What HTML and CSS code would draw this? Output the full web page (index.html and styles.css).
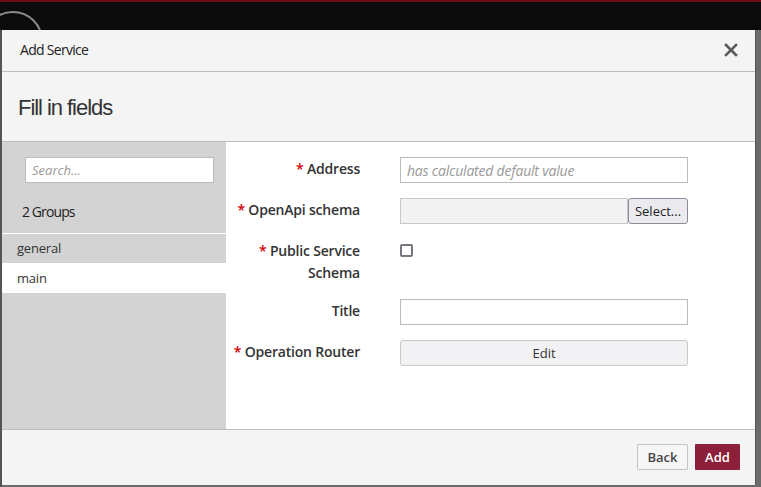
FILE: index.html
```html
<!DOCTYPE html>
<html>
<head>
<meta charset="utf-8">
<link rel="stylesheet" href="styles.css">
</head>
<body>
<div class="page">
  <div class="topbar">
    <svg class="logo" width="60" height="30" viewBox="0 0 60 30"><circle cx="13" cy="41" r="29" fill="none" stroke="#8a8a8a" stroke-width="2"/></svg>
  </div>
  <div class="backdrop"></div>
</div>

<div class="modal">
  <div class="modal-header">
    <span class="modal-title">Add Service</span>
    <button class="close" aria-label="Close">
      <svg width="14" height="14" viewBox="0 0 14 14"><path d="M2 2 L12 12 M12 2 L2 12" stroke="#5a5a5a" stroke-width="2.6" stroke-linecap="square"/></svg>
    </button>
  </div>
  <div class="modal-sub">
    <h1 class="sub-title">Fill in fields</h1>
  </div>
  <div class="modal-body">
    <aside class="sidebar">
      <input class="search" type="text" placeholder="Search...">
      <div class="groups-count">2 Groups</div>
      <ul class="groups">
        <li class="group">general</li>
        <li class="group active">main</li>
      </ul>
    </aside>
    <form class="form">
      <label class="lbl"><span class="req">*</span> Address</label>
      <div class="ctl"><input class="inp" type="text" placeholder="has calculated default value"></div>

      <label class="lbl"><span class="req">*</span> OpenApi schema</label>
      <div class="ctl file"><input class="inp disabled" type="text" disabled><button type="button" class="select-btn">Select...</button></div>

      <label class="lbl two"><span class="req">*</span> Public Service Schema</label>
      <div class="ctl"><span class="checkbox"></span></div>

      <label class="lbl">Title</label>
      <div class="ctl"><input class="inp" type="text"></div>

      <label class="lbl"><span class="req">*</span> Operation Router</label>
      <div class="ctl"><button type="button" class="edit-btn">Edit</button></div>
    </form>
  </div>
  <div class="modal-footer">
    <button class="btn back">Back</button>
    <button class="btn add">Add</button>
  </div>
</div>
</body>
</html>
```

FILE: styles.css
```css
* { box-sizing: border-box; }
html, body { margin: 0; padding: 0; }
body {
  width: 761px;
  height: 487px;
  overflow: hidden;
  background: #666;
  font-family: "Open Sans", "Liberation Sans", sans-serif;
  position: relative;
}
.page { height: 100%; display: flex; flex-direction: column; }
.topbar {
  height: 30px;
  background: #0b0b0b;
  border-top: 2px solid #6b0d18;
  position: relative;
  overflow: hidden;
}
.logo { position: absolute; left: 0; top: -2px; }
.backdrop { flex: 1; background: linear-gradient(to right, #555 0 2px, #6b6b6b 2px); }

.modal {
  position: absolute;
  left: 2px;
  top: 30px;
  width: 754px;
  height: 455px;
  background: #fff;
  border-right: 1px solid #555;
  display: flex;
  flex-direction: column;
}
.modal-header {
  height: 42px;
  background: #f4f4f4;
  border-bottom: 1px solid #bdbdbd;
  display: flex;
  align-items: center;
  justify-content: space-between;
  padding: 0 17px 0 18px;
}
.modal-title {
  font-size: 14px;
  color: #222;
  letter-spacing: -0.7px;
  margin-top: -2px;
}
.close {
  border: 0;
  background: none;
  padding: 0;
  width: 14px;
  height: 14px;
  display: flex;
  margin-top: -1px;
}
.modal-sub {
  height: 70px;
  background: #f4f4f4;
  border-bottom: 1px solid #bdbdbd;
  padding: 23px 0 0 16px;
}
.sub-title {
  margin: 0;
  font-family: "Liberation Sans", Arial, sans-serif;
  font-weight: normal;
  font-size: 22px;
  line-height: 26px;
  color: #333;
  letter-spacing: -1.05px;
}
.modal-body {
  flex: 1;
  display: flex;
  min-height: 0;
}
.sidebar {
  width: 224px;
  background: #d3d3d3;
  padding-top: 15px;
  display: flex;
  flex-direction: column;
}
.search {
  margin: 0 12px 0 23px;
  height: 26px;
  border: 1px solid #bbb;
  background: #fff;
  font-family: "Open Sans", sans-serif;
  font-size: 13px;
  padding: 0 6px;
  outline: none;
}
.search::placeholder { color: #999; font-style: italic; }
.groups-count {
  height: 50px;
  line-height: 58px;
  padding-left: 20px;
  font-size: 14px;
  color: #222;
  letter-spacing: -0.9px;
}
.groups { list-style: none; margin: 0; padding: 0; border-top: 1px solid #fff; }
.group {
  height: 29px;
  line-height: 29px;
  padding-left: 15px;
  font-size: 13px;
  color: #333;
  letter-spacing: -0.2px;
}
.group.active { background: #fff; height: 30px; line-height: 30px; }

.form {
  flex: 1;
  display: grid;
  grid-template-columns: 134px 288px;
  column-gap: 40px;
  row-gap: 15px;
  align-content: start;
  padding-top: 15px;
  margin: 0;
}
.lbl {
  text-align: right;
  font-size: 14px;
  font-weight: 600;
  line-height: 22px;
  color: #333;
  letter-spacing: -0.2px;
  margin-top: 1px;
}
.lbl.two { padding-left: 20px; }
.req { color: #d40000; }
.ctl { display: flex; align-items: flex-start; min-height: 26px; }
.inp {
  width: 100%;
  height: 26px;
  border: 1px solid #bbb;
  background: #fff;
  padding: 0 6px;
  font-family: "Open Sans", sans-serif;
  font-size: 14px;
  letter-spacing: -0.2px;
  outline: none;
}
.inp::placeholder { color: #999; font-style: italic; }
.inp.disabled { background: #f3f3f3; border-color: #c8c8c8; width: 228px; flex: none; }
.select-btn {
  width: 60px;
  height: 26px;
  border: 1px solid #8c8c98;
  border-radius: 3px;
  background: #ebebef;
  font-family: "Open Sans", sans-serif;
  font-size: 13px;
  color: #222;
  padding: 0;
}
.checkbox {
  width: 13px;
  height: 13px;
  border: 2px solid #76767f;
  border-radius: 2px;
  margin-top: 5px;
  background: #fff;
}
.edit-btn {
  width: 100%;
  height: 26px;
  border: 1px solid #c8c8c8;
  border-radius: 3px;
  background: #f2f2f4;
  font-family: "Open Sans", sans-serif;
  font-size: 13px;
  color: #333;
  padding: 0;
}
.modal-footer {
  height: 56px;
  background: #f4f4f4;
  border-top: 1px solid #bdbdbd;
  display: flex;
  justify-content: flex-end;
  align-items: flex-start;
  gap: 7px;
  padding: 14px 15px 0 0;
}
.btn {
  height: 26px;
  font-family: "Open Sans", sans-serif;
  font-size: 13px;
  font-weight: 600;
  padding: 0;
  border-radius: 1px;
}
.btn.back { width: 51px; background: #f6f6f6; border: 1px solid #c4c4c4; color: #444; }
.btn.add { width: 45px; background: #8c1f39; border: 0; color: #fff; }
```
